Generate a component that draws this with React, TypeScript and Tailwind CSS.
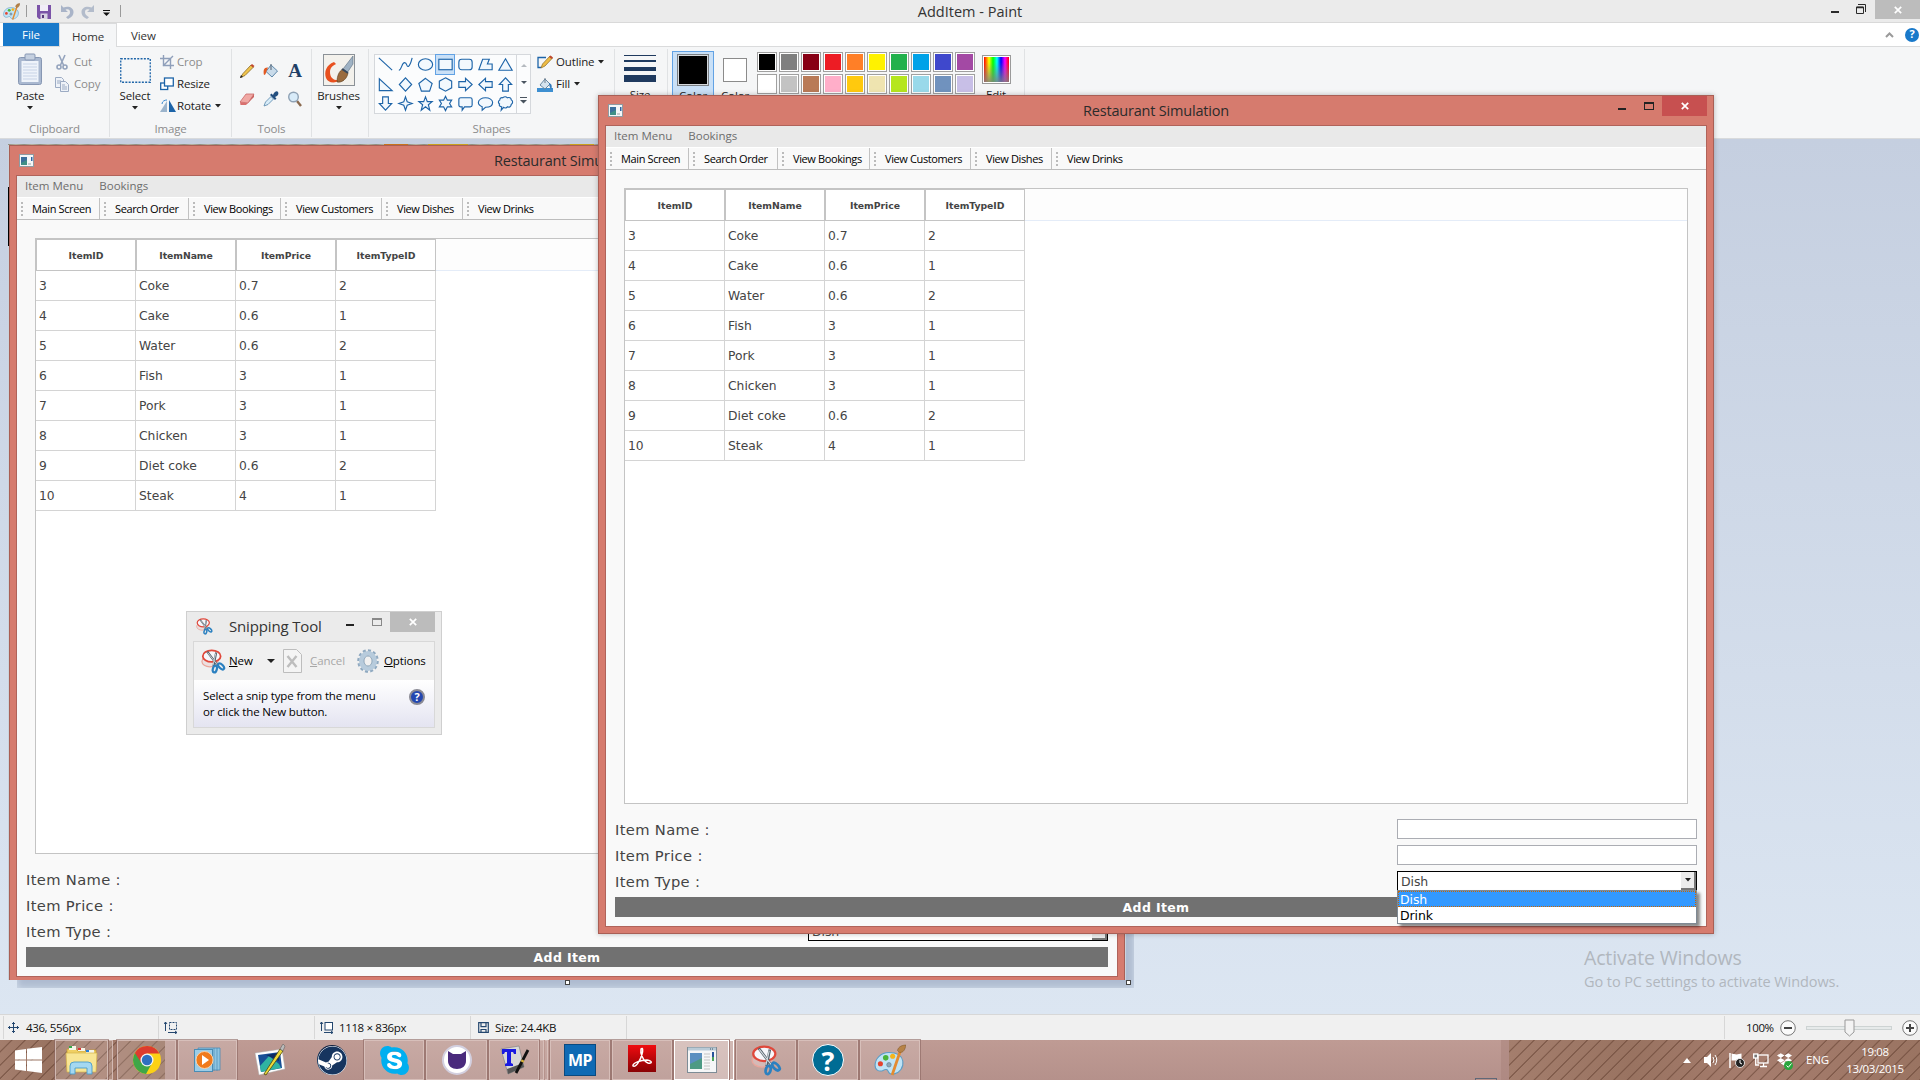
import React from "react";
import { FaSkype, FaSteam, FaDropbox } from "react-icons/fa";

const DownArrow = ({ className = "" }: { className?: string }) => (
  <svg className={"shrink-0 " + className} width="6" height="4" viewBox="0 0 6 4">
    <path d="M0 0h6L3 3.6z" fill="#222" />
  </svg>
);

const CloseX = ({ s = 8 }: { s?: number }) => (
  <svg width={s} height={s} viewBox="0 0 8 8">
    <path d="M.8.8l6.4 6.4M7.2.8L.8 7.2" stroke="#fff" strokeWidth="1.7" />
  </svg>
);

const PaletteIcon = ({ size, className = "" }: { size: number; className?: string }) => (
  <svg className={"shrink-0 " + className} width={size} height={size} viewBox="0 0 30 30">
    <path d="M14 8C6 8 1 14 1 20c0 5 4 6 7 5 2-1 4-2 5 0 1 2 2 4 6 3 5-1 9-6 8-12-1-5-6-8-13-8z" fill="#bfe3f5" stroke="#5d9cc4" />
    <circle cx="6" cy="18.500" r="2.400" fill="#e5432d" />
    <circle cx="11" cy="13" r="2.600" fill="#4bb43a" />
    <circle cx="17.500" cy="11.500" r="2.400" fill="#f5b51c" />
    <circle cx="14" cy="19.500" r="2.100" fill="#8fa6b5" stroke="#5d7c90" strokeWidth=".6" />
    <path d="M24.500 7L17 29" stroke="#e38b31" strokeWidth="2.600" />
    <path d="M22 6c1-4 5-5 8-5-1 4-2 7-6 7z" fill="#b78246" stroke="#7d5628" strokeWidth=".5" />
  </svg>
);

const SnipIcon = ({ size, className = "" }: { size: number; className?: string }) => (
  <svg className={"shrink-0 " + className} width={size} height={size} viewBox="0 0 28 28">
    <ellipse cx="10" cy="14" rx="9" ry="6" fill="#e8cfcf" fillOpacity=".5" stroke="#e9a69c" strokeWidth="1.300" />
    <ellipse cx="12" cy="8" rx="10" ry="6.500" fill="#f7f7fb" stroke="#e0483b" strokeWidth="2" />
    <path d="M7 3l12 16M17 4l-3 15" stroke="#55606a" strokeWidth="2.400" />
    <path d="M7.500 4l11 14M16.500 5l-3 13" stroke="#d6dde2" strokeWidth="1" />
    <ellipse cx="15.500" cy="22.500" rx="2.200" ry="3.800" transform="rotate(15 15.500 22.500)" fill="none" stroke="#2b80c0" strokeWidth="2.500" />
    <ellipse cx="22.500" cy="19.500" rx="2.200" ry="4.200" transform="rotate(-45 22.500 19.500)" fill="none" stroke="#2b80c0" strokeWidth="2.500" />
  </svg>
);

/* ---------- Paint ribbon ---------- */

const shapes: React.ReactNode[] = [
  <path d="M3 3l14 13" />,
  <path d="M3 16c3 0 3-8 6-8s2 5 4 4 3-5 4-9" fill="none" />,
  <ellipse cx="10" cy="10" rx="7.500" ry="6" />,
  <rect x="3" y="4.500" width="14" height="11" />,
  <rect x="3" y="4.500" width="14" height="11" rx="3" />,
  <path d="M3 15.500L7 4.500h7l-2 5h5v6z" />,
  <path d="M10 4l7 12H3z" />,
  <path d="M3.500 4v12.500H17z" />,
  <path d="M10 3l6.500 7L10 17l-6.500-7z" />,
  <path d="M10 3.500l7 5.500-2.700 8H5.700L3 9z" />,
  <path d="M10 3l6.500 3.500v7L10 17l-6.500-3.500v-7z" />,
  <path d="M3 7h7V3.500l7 6.500-7 6.500V13H3z" />,
  <path d="M17 7h-7V3.500L3 10l7 6.500V13h7z" />,
  <path d="M7 17v-7H3.500L10 3l6.500 7H13v7z" />,
  <path d="M7 3v7H3.500L10 17l6.500-7H13V3z" />,
  <path d="M10 3l1.800 5.200L17 10l-5.200 1.800L10 17l-1.800-5.200L3 10l5.200-1.800z" />,
  <path d="M10 3l1.900 5H17l-4 3.300L14.500 17 10 13.500 5.500 17 7 11.300 3 8h5.100z" />,
  <path d="M10 2.500l2 4h4.500L14.300 10l2.200 3.500H12l-2 4-2-4H3.500L5.700 10 3.500 6.500H8z" />,
  <path d="M5 4h10q2 0 2 2v5.500q0 2-2 2H9L6.500 17v-3.500H5q-2 0-2-2V6q0-2 2-2z" />,
  <path d="M10 4c4 0 7.500 2 7.500 5s-3 5-7.500 5L6.500 17v-3.600C4 12.500 2.500 11 2.500 9c0-3 3.500-5 7.500-5z" />,
  <path d="M7 4c2-1.500 4-1 5 0 2-.8 4 .2 4 2 2 1 2 4 0 5 0 2-2 3.400-4 2.500-1 1.500-3 1.500-4 .5L5.500 17l.5-3.400C4 13.500 3 12 3.700 10.500 2 9.500 2.300 7 4 6.300 4 4.500 5.500 3.500 7 4z" />,
];

const palette = [
  ["bg-black", "bg-[#7f7f7f]", "bg-[#880015]", "bg-[#ed1c24]", "bg-[#ff7f27]", "bg-[#fff200]", "bg-[#22b14c]", "bg-[#00a2e8]", "bg-[#3f48cc]", "bg-[#a349a4]"],
  ["bg-white", "bg-[#c3c3c3]", "bg-[#b97a57]", "bg-[#ffaec9]", "bg-[#ffc90e]", "bg-[#efe4b0]", "bg-[#b5e61d]", "bg-[#99d9ea]", "bg-[#7092be]", "bg-[#c8bfe7]"],
];

const Group = ({ w, label, children }: { w: string; label?: string; children: React.ReactNode }) => (
  <div className={"flex h-[88px] shrink-0 flex-col border-r border-[#e0e2e4] " + w}>
    <div className="flex h-[72px]">{children}</div>
    <div className="text-center leading-4 text-[#8c8c8c]">{label}</div>
  </div>
);

const PaintRibbon = () => (
  <div className="flex h-[92px] items-start border-b border-[#d8dadc] bg-[#f5f6f7] pt-[2px] text-[11.5px] tracking-[-0.15px] text-[#222]">
    <Group w="w-[110px]" label="Clipboard">
      <div className="ml-[9px] flex w-[42px] flex-col items-center pt-[4px]">
        <svg width="26" height="33" viewBox="0 0 26 33">
          <rect x="1.500" y="4.500" width="23" height="27" rx="2" fill="#a9b8d0" stroke="#8797b3" />
          <rect x="4.500" y="8" width="17" height="21" fill="#eef3fa" />
          <path d="M6 11h14M6 14h14M6 17h14M6 20h14M6 23h14M6 26h14" stroke="#c7d3e6" />
          <rect x="8" y="1" width="10" height="6" rx="1" fill="#c5d0e0" stroke="#8797b3" />
        </svg>
        <span className="mt-[2px] leading-4">Paste</span>
        <DownArrow className="mt-[2px]" />
      </div>
      <div className="ml-[3px] flex flex-col gap-[6px] pt-[5px] text-[#8c8c8c]">
        <div className="flex h-4 items-center gap-[4px]">
          <svg width="16" height="16" viewBox="0 0 16 16" fill="none" stroke="#94a3bd" strokeWidth="1.600">
            <path d="M5 1l4.500 10M11 1L6.500 11" /><circle cx="5" cy="13" r="2" /><circle cx="11" cy="13" r="2" />
          </svg>
          Cut
        </div>
        <div className="flex h-4 items-center gap-[4px]">
          <svg width="16" height="16" viewBox="0 0 16 16" fill="#eef2f8" stroke="#9cabc3">
            <path d="M1.500 1.500h6l2 2v8h-8zM3 5h4M3 7h4" /><path d="M6.500 5.500h5l3 3v7h-8zM8 9h3M8 11h5M8 13h5" />
          </svg>
          Copy
        </div>
      </div>
    </Group>
    <Group w="w-[122px]" label="Image">
      <div className="ml-[5px] flex w-[40px] flex-col items-center pt-[9px]">
        <svg width="31" height="25" viewBox="0 0 31 25"><rect x=".75" y=".75" width="29.500" height="23.500" fill="none" stroke="#1d64a8" strokeWidth="1.300" strokeDasharray="2 1.300" /></svg>
        <span className="mt-[5px] leading-4">Select</span>
        <DownArrow className="mt-[2px]" />
      </div>
      <div className="ml-[5px] flex flex-col gap-[6px] pt-[5px]">
        <div className="flex h-4 items-center gap-[3px] text-[#8c8c8c]">
          <svg width="14" height="14" viewBox="0 0 14 14" fill="none" stroke="#8f9fba" strokeWidth="1.400"><path d="M3.500 0v10.500H14M0 3.500h10.500V14M3 11l10-10" /></svg>
          Crop
        </div>
        <div className="flex h-4 items-center gap-[3px]">
          <svg width="14" height="14" viewBox="0 0 14 14" fill="#fff" stroke="#1d64a8" strokeWidth="1.300"><rect x=".7" y="6" width="7" height="6.500" /><rect x="4.500" y="1" width="8.800" height="8" /></svg>
          Resize
        </div>
        <div className="flex h-4 items-center gap-[3px]">
          <svg width="16" height="14" viewBox="0 0 16 14"><path d="M7 2v11H0z" fill="#9bb4cc" /><path d="M9 1v12h7z" fill="#1d64a8" /><path d="M2 5c0-3 3-4 5-4" stroke="#3a8ad0" fill="none" /></svg>
          <span className="-ml-[2px]">Rotate</span>
          <DownArrow className="ml-[1px]" />
        </div>
      </div>
    </Group>
    <Group w="w-[80px]" label="Tools">
      <div className="grid grid-cols-3 content-start gap-x-[8px] gap-y-[12px] pt-[14px] pl-[7px]">
        <svg width="16" height="16" viewBox="0 0 16 16"><path d="M1.500 14.500L4 10.500 12 2l2.500 2L6 12.500z" fill="#f0c44c" stroke="#8a6a25" strokeWidth=".8" /><path d="M11.500 2.500L13 1l2.500 2-1.500 1.500z" fill="#c0492f" /><path d="M1 15l1-3 2 2z" fill="#222" /></svg>
        <svg width="16" height="16" viewBox="0 0 16 16"><path d="M8 2l6.500 6L9 14 3 8.500z" fill="#c9dbea" stroke="#5e88aa" /><path d="M8 1v6" stroke="#6c7c8c" strokeWidth="1.300" /><path d="M5 4.500C1 4 0 7 1 12c2 0 2-3 3-5z" fill="#e35a22" /></svg>
        <span className="flex h-4 w-4 items-center justify-center font-['Liberation_Serif'] text-[19px] font-bold tracking-normal text-[#1f3f66]">A</span>
        <svg width="16" height="16" viewBox="0 0 16 16"><path d="M1 11l6-8h8l-6 9z" fill="#f0a8a4" stroke="#c96a6a" strokeWidth=".8" /><path d="M1 11l.5 3H7l2-2z" fill="#d9706f" /><path d="M9 12l6-9v3l-8 8z" fill="#c9625f" /></svg>
        <svg width="16" height="16" viewBox="0 0 16 16"><path d="M1 15l1.500-4L8 5.500 10.500 8 5 13.500z" fill="#d8ecf8" stroke="#5585aa" strokeWidth=".8" /><path d="M7 4l5 5 1.500-1.500L12 6c3-1 4-3 3-5s-4 0-5 3l-1.500-1.500z" fill="#234f7f" /></svg>
        <svg width="16" height="16" viewBox="0 0 16 16"><path d="M10 10l4 5" stroke="#8a6a4f" strokeWidth="2.400" /><circle cx="6.500" cy="6" r="4.800" fill="#d8ebf9" stroke="#8fa2b5" strokeWidth="1.400" /></svg>
      </div>
    </Group>
    <Group w="w-[57px]">
      <div className="flex w-[56px] flex-col items-center pt-[5px] pr-[3px]">
        <svg width="32" height="32" viewBox="0 0 32 32">
          <rect x=".5" y=".5" width="31" height="31" fill="#f3f1ec" stroke="#8b9197" />
          <path d="M11 8C3 11 1 18 3 24c2 5 9 6 14 2-6 1-10-2-10-8 0-5 4-7 6-8z" fill="#e8501f" />
          <path d="M20 15L30 2v8l-6 9z" fill="#9fb2c4" stroke="#5b6d80" strokeWidth=".6" />
          <path d="M14 28c0-6 2-11 6-13l5 4c-1 6-6 10-11 9z" fill="#9a6b3e" stroke="#5a3a1a" strokeWidth=".6" />
          <path d="M19 15l6 4" stroke="#39495c" strokeWidth="2" />
        </svg>
        <span className="mt-[2px] leading-4">Brushes</span>
        <DownArrow className="mt-[2px]" />
      </div>
    </Group>
    <Group w="w-[246px]" label="Shapes">
      <div className="mt-[5px] ml-[5px] flex h-[60px] w-[157px] border border-[#d5d8dc] bg-[#fbfcfd]">
        <div className="grid w-[142px] grid-cols-7 content-start border-r border-[#d5d8dc]">
          {shapes.map((s, i) => (
            <span key={i} className={i === 3 ? "-mt-px -mb-[0.5px] flex h-[21px] w-[20px] items-center justify-center border border-[#62a2e4] bg-[#c9e0f7]" : "flex h-[19.500px] w-[20px] items-center justify-center"}>
              <svg className="shrink-0" width="19" height="19" viewBox="0 0 20 20" fill="#f2f8fd" stroke="#1d64a8" strokeWidth="1.200">{s}</svg>
            </span>
          ))}
        </div>
        <div className="flex flex-1 flex-col items-center justify-between py-[9px]">
          <svg width="6" height="3" viewBox="0 0 6 3"><path d="M0 3h6L3 0z" fill="#b5bac0" /></svg>
          <svg width="6" height="3" viewBox="0 0 6 3"><path d="M0 0h6L3 3z" fill="#4a5560" /></svg>
          <svg width="7" height="7" viewBox="0 0 7 7"><path d="M0 .5h7" stroke="#4a5560" /><path d="M0 3h7L3.500 6.500z" fill="#4a5560" /></svg>
        </div>
      </div>
      <div className="ml-[6px] flex flex-col gap-[6px] pt-[5px]">
        <div className="flex h-4 items-center gap-[3px]">
          <svg width="16" height="14" viewBox="0 0 16 14"><path d="M9 2.500H1v10h3" stroke="#1d64a8" fill="none" strokeWidth="1.300" /><path d="M4 13l1.500-4L13 1l2.500 2L8 11z" fill="#eebc45" stroke="#8a6a25" strokeWidth=".7" /><path d="M12 2l1.500-1.500 2.500 2L14.500 4z" fill="#c0492f" /></svg>
          Outline
          <DownArrow className="ml-[1px]" />
        </div>
        <div className="flex h-4 items-center gap-[3px]">
          <svg width="16" height="15" viewBox="0 0 16 15"><rect y="11" width="16" height="4" fill="#3d8fd1" /><path d="M8 2l5 5-5 5-5-4z" fill="#d5e3ee" stroke="#5e7f9a" strokeWidth=".9" /><path d="M8 1v5" stroke="#6c7c8c" /><path d="M12 6c3 1 3 3 2.500 6-2-1-2-3-2.500-6z" fill="#2f77b8" /></svg>
          Fill
          <DownArrow className="ml-[1px]" />
        </div>
      </div>
    </Group>
    <Group w="w-[53px]">
      <div className="flex w-[50px] flex-col items-center pt-[5px]">
        <div className="mt-[1px] flex w-[32px] flex-col">
          <div className="h-[1px] bg-[#1f3a5f]" />
          <div className="mt-[4px] h-[2px] bg-[#1f3a5f]" />
          <div className="mt-[5px] h-[4px] bg-[#1f3a5f]" />
          <div className="mt-[4px] h-[7px] bg-[#1f3a5f]" />
        </div>
        <span className="mt-[5px] leading-4">Size</span>
      </div>
    </Group>
    <Group w="w-[357px]">
      <div className="mt-[2px] ml-[4px] flex h-[64px] w-[42px] flex-col items-center border border-[#62a2e4] bg-[#c9e0f7] pt-[2px]">
        <div className="h-[32px] w-[32px] border border-[#7b8085] bg-black outline-1 -outline-offset-2 outline-[#d4d8dc]" />
        <span className="mt-[2px] leading-4">Color</span>
      </div>
      <div className="ml-[3px] flex w-[36px] flex-col items-center pt-[9px]">
        <div className="h-[24px] w-[24px] border border-[#8b8b8b] bg-white" />
        <span className="mt-[6px] leading-4">Color</span>
      </div>
      <div className="mt-[3px] ml-[4px] flex flex-col gap-[2px]">
        {palette.map((row, r) => (
          <div key={r} className="flex gap-[2px]">
            {row.map((c) => (
              <div key={c} className="h-[20px] w-[20px] border border-[#a0a0a0] bg-white p-[1px]"><div className={"h-full w-full " + c} /></div>
            ))}
          </div>
        ))}
      </div>
      <div className="ml-[6px] flex w-[30px] flex-col items-center pt-[6px]">
        <div className="h-[29px] w-[29px] border border-[#9a9a9a] bg-white p-[1px]">
          <div className="h-full w-full bg-[linear-gradient(180deg,rgba(128,128,128,0)_20%,rgba(128,128,128,0.850)_100%),linear-gradient(90deg,#f00,#ff0_20%,#0f0_36%,#0ff_52%,#00f_68%,#f0f_84%,#f00)]" />
        </div>
        <span className="mt-[3px] leading-4">Edit</span>
      </div>
    </Group>
  </div>
);

const PaintHeader = () => (
  <>
    <div className="flex h-[23px] border-b border-[#d9d9d9] bg-[#ebebeb]">
      <div className="flex w-[200px] items-center pl-[3px]">
        <PaletteIcon size={17} />
        <div className="ml-[6px] h-[12px] w-px bg-[#9a9a9a]" />
        <svg className="mt-[2px] ml-[10px]" width="14" height="14" viewBox="0 0 14 14"><path d="M0 0h14v14H2l-2-2z" fill="#7b53a8" /><rect x="3" width="8" height="6" fill="#f1edf7" /><rect x="3.500" y="8.500" width="7" height="5.500" fill="#d8d2e2" /><rect x="5" y="10" width="2" height="3" fill="#54387a" /></svg>
        <svg className="mt-[1px] ml-[9px]" width="14" height="14" viewBox="0 0 14 14"><path d="M1 0v7h7L5.500 4.700c3-1 4.500 0 4.500 2.500 0 2-1.500 3.500-4 5L8 14c4-2 5.500-4 5.500-7 0-4.500-5-6.500-10-4.500z" fill="#a9b4c8" /></svg>
        <svg className="mt-[1px] ml-[7px] -scale-x-100" width="14" height="14" viewBox="0 0 14 14"><path d="M1 0v7h7L5.500 4.700c3-1 4.500 0 4.500 2.500 0 2-1.500 3.500-4 5L8 14c4-2 5.500-4 5.500-7 0-4.500-5-6.500-10-4.500z" fill="#b3bccb" /></svg>
        <svg className="mt-[4px] ml-[8px]" width="7" height="6" viewBox="0 0 7 6"><path d="M0 .5h7" stroke="#111" /><path d="M0 2.500h7L3.500 6z" fill="#111" /></svg>
        <div className="ml-[10px] h-[12px] w-px bg-[#9a9a9a]" />
      </div>
      <div className="flex-1 text-center text-[14.500px] leading-[23px] text-[#333]">AddItem - Paint</div>
      <div className="flex w-[180px] justify-end">
        <div className="mt-[11px] h-[2px] w-[8px] bg-[#2a2a2a]" />
        <svg className="mt-[4px] ml-[17px]" width="10" height="10" viewBox="0 0 10 10" fill="none" stroke="#2a2a2a"><path d="M2 .5h7.500V8" /><path d="M.5 3h7v6.500h-7z" /><path d="M.5 3.500h7" strokeWidth="1.500" /></svg>
        <div className="ml-[9px] flex h-[19px] w-[45px] items-center justify-center bg-[#bcbcbc]"><CloseX /></div>
      </div>
    </div>
    <div className="flex h-[24px] border-b border-[#dadbdc] bg-white pl-[3px] text-[11.500px] tracking-[-0.1px]">
      <div className="h-[23px] w-[56px] bg-[#1979ca] text-center leading-[24px] text-white">File</div>
      <div className="h-[24px] w-[58px] border-x border-t border-[#dadbdc] bg-[#f5f6f7] text-center leading-[25px] text-[#333]">Home</div>
      <div className="ml-[14px] leading-[26px] text-[#333]">View</div>
      <div className="ml-auto flex items-center gap-[11px]">
        <svg width="9" height="6" viewBox="0 0 9 6"><path d="M1 5l3.500-3.500L8 5" stroke="#9a9a9a" strokeWidth="2" fill="none" /></svg>
        <div className="mr-[1px] flex h-[14px] w-[14px] items-center justify-center rounded-full bg-[#1979ca] text-[11px] font-bold text-white">?</div>
      </div>
    </div>
    <PaintRibbon />
  </>
);

/* ---------- Restaurant application window ---------- */

const rows = [
  ["3", "Coke", "0.7", "2"],
  ["4", "Cake", "0.6", "1"],
  ["5", "Water", "0.6", "2"],
  ["6", "Fish", "3", "1"],
  ["7", "Pork", "3", "1"],
  ["8", "Chicken", "3", "1"],
  ["9", "Diet coke", "0.6", "2"],
  ["10", "Steak", "4", "1"],
];

const tools = [
  ["Main Screen", "w-[83px]"],
  ["Search Order", "w-[89px]"],
  ["View Bookings", "w-[92px]"],
  ["View Customers", "w-[101px]"],
  ["View Dishes", "w-[81px]"],
  ["View Drinks", "w-[90px]"],
];

const AppIcon = () => (
  <svg width="15" height="13" viewBox="0 0 15 13">
    <rect x=".5" y=".5" width="14" height="12" fill="#f4f7f8" stroke="#8e9ba3" />
    <rect x="2" y="3" width="6" height="8" fill="#3f8f86" />
    <path d="M2 3h6v3l-6 3z" fill="#3c6f9c" />
    <rect x="12" y="3" width="1.500" height="4" fill="#2f67a5" />
    <rect x="9" y="9" width="3" height="2" fill="#c8cdd0" />
  </svg>
);

const RestaurantWindow = ({ open = false }: { open?: boolean }) => (
  <div className="flex h-[839px] w-[1116px] flex-col border border-[#a95f55] bg-[#d67b6e] px-[6px] pb-[6px]">
    <div className="flex h-[29px] shrink-0">
      <div className="w-[135px] pt-[8px] pl-[3px]"><AppIcon /></div>
      <div className="flex-1 text-center text-[14.500px] leading-[29px] tracking-[-0.2px] text-[#2b2b2b]">Restaurant Simulation</div>
      <div className="flex w-[135px] justify-end">
        <div className="mt-[12px] h-[2px] w-[8px] bg-[#222]" />
        <div className="mt-[6px] ml-[18px] h-[8px] w-[10px] border border-t-2 border-[#222]" />
        <div className="ml-[8px] flex h-[20px] w-[45px] items-center justify-center bg-[#c75050]"><CloseX /></div>
      </div>
    </div>
    <div className="flex flex-1 flex-col border border-[#b0635a] bg-[#f9f9f9]">
      <div className="flex h-[21px] gap-[16px] bg-[#e9e9e9] pl-[8px] text-[11.500px] leading-[20px] text-[#6d6d6d]">
        <span>Item Menu</span>
        <span>Bookings</span>
      </div>
      <div className="flex h-[23px] border-y border-t-white border-b-[#bdbdbd] text-[11px] tracking-[-0.38px] text-black">
        {tools.map(([t, w], i) => (
          <div key={t} className={"flex items-center pl-[4px] " + w + (i < 5 ? " border-r border-[#c2c2c2]" : "")}>
            <div className="h-[14px] w-[2px] bg-[repeating-linear-gradient(180deg,#bbb_0px,#bbb_2px,transparent_2px,transparent_4px)]" />
            <span className="ml-[9px] leading-5 whitespace-nowrap">{t}</span>
          </div>
        ))}
      </div>
      <div className="mx-[18px] mt-[18px] h-[616px] border border-[#c4c4c4] bg-white font-['DejaVu_Sans'] text-[#444]">
        <div className="flex h-[32px] border-b border-[#e4ecf8] bg-[#fdfdfd] text-[9.300px] font-bold tracking-[-0.05px]">
          {["ItemID", "ItemName", "ItemPrice", "ItemTypeID"].map((h) => (
            <div key={h} className="h-[32px] w-[100px] border border-[#c4c4c4] bg-white text-center leading-[32px]">{h}</div>
          ))}
        </div>
        {rows.map((r) => (
          <div key={r[0]} className="flex h-[30px] text-[12.300px] leading-[31px]">
            {r.map((c, i) => (
              <div key={i} className="w-[100px] border-r border-b border-[#d4d4d4] pl-[3px]">{c}</div>
            ))}
          </div>
        ))}
      </div>
      <div className="mx-[9px] mt-[15px] flex flex-col gap-[6px] font-['DejaVu_Sans'] text-[14.700px] leading-[22px] tracking-[0.35px] text-[#444]">
        <div className="flex h-[20px] justify-between">
          <span>Item Name :</span>
          <div className="w-[300px] border border-[#abadb3] bg-white" />
        </div>
        <div className="flex h-[20px] justify-between">
          <span>Item Price :</span>
          <div className="w-[300px] border border-[#abadb3] bg-white" />
        </div>
        <div className="flex h-[20px] justify-between">
          <span>Item Type :</span>
          <div className="relative flex w-[300px] justify-between border border-black bg-white pl-[3px] text-[12.500px] leading-[19px] tracking-[-0.1px]">
            Dish
            <div className="flex h-[18px] w-[15px] items-center justify-center border-r-2 border-b-2 border-[#777] bg-[#ececec]">
              <DownArrow />
            </div>
            {open && (
              <div className="absolute top-[18px] -left-px z-20 h-[34px] w-[300px] border border-[#7f8a95] bg-white leading-[17px] text-black shadow-[3px_3px_3px_rgba(0,0,0,0.450)]">
                <div className="h-[16px] border border-dotted border-[#cc6600] bg-[#3399ff] pl-[1px] leading-[15px] text-white">Dish</div>
                <div className="pl-[2px]">Drink</div>
              </div>
            )}
          </div>
        </div>
        <div className="h-[20px] bg-[#717171] text-center text-[12.500px] leading-[21px] font-bold text-white">Add Item</div>
      </div>
    </div>
  </div>
);

/* ---------- Snipping tool ---------- */

const SnippingTool = () => (
  <div className="flex h-[124px] w-[256px] flex-col border border-[#cfcfcf] bg-[#ebebeb] px-[6px] pb-[6px]">
    <div className="flex h-[29px]">
      <SnipIcon size={17} className="mt-[6px] ml-[3px]" />
      <span className="mt-[3px] ml-[16px] text-[15px] leading-[22px] tracking-[-0.15px] text-[#333]">Snipping Tool</span>
      <div className="ml-auto flex">
        <div className="mt-[12px] h-[2px] w-[8px] bg-[#222]" />
        <div className="mt-[6px] ml-[18px] h-[8px] w-[10px] border border-t-2 border-[#888]" />
        <div className="ml-[8px] flex h-[20px] w-[45px] items-center justify-center bg-[#bcbcbc]"><CloseX /></div>
      </div>
    </div>
    <div className="flex flex-1 flex-col border border-[#d8d8d8]">
      <div className="flex h-[38px] items-center bg-[#f0f0f0] pl-[7px] text-[11.500px] tracking-[-0.1px] text-black">
        <SnipIcon size={25} />
        <span className="ml-[3px] w-[38px]"><u>N</u>ew</span>
        <svg width="8" height="4" viewBox="0 0 8 4"><path d="M0 0h8L4 4z" fill="#222" /></svg>
        <svg className="ml-[8px]" width="19" height="24" viewBox="0 0 19 24"><path d="M.5.500h13l5 5v18H.5z" fill="#f4f4f4" stroke="#bdbdbd" /><path d="M4.500 7l9 11M13.500 7l-9 11" stroke="#bdbdbd" strokeWidth="2.400" /></svg>
        <span className="ml-[8px] text-[#a8a8a8]"><u>C</u>ancel</span>
        <svg className="ml-[12px]" width="22" height="24" viewBox="0 0 22 24">
          <ellipse cx="11" cy="12" rx="9.500" ry="10.500" fill="none" stroke="#8fa9c0" strokeWidth="2.500" strokeDasharray="3 2.200" />
          <ellipse cx="11" cy="12" rx="6.500" ry="7.500" fill="none" stroke="#b7cbdc" strokeWidth="5" />
          <ellipse cx="11" cy="12" rx="4" ry="5" fill="#f0f0f0" stroke="#7f99b0" strokeWidth=".8" />
        </svg>
        <span className="ml-[5px]"><u>O</u>ptions</span>
      </div>
      <div className="flex flex-1 justify-between bg-linear-to-b from-white to-[#e4e4f1] pt-[8px] pr-[9px] pl-[9px] text-[11.500px] leading-[16px] tracking-[-0.13px] text-black">
        <div className="whitespace-nowrap">Select a snip type from the menu<br />or click the New button.</div>
        <div className="mt-px flex h-[16px] w-[16px] items-center justify-center rounded-full border-2 border-[#8a8a94] bg-[#2347b0] text-[11px] font-bold text-white">?</div>
      </div>
    </div>
  </div>
);

/* ---------- Status bar and taskbar ---------- */

const StatusBar = () => (
  <div className="flex h-[26px] border-t border-[#d7d7d7] bg-[#f0f0f0] py-[1px] pl-[3px] text-[11.500px] leading-[24px] tracking-[-0.38px] text-[#111]">
    <div className="flex w-[156px] items-center border-x border-[#d7d7d7] pl-[4px]">
      <svg width="11" height="11" viewBox="0 0 11 11" stroke="#24476f" fill="none"><path d="M5.500 0v11M0 5.500h11M4 2l1.500-1.500L7 2M4 9l1.500 1.500L7 9M2 4L.5 5.500 2 7M9 4l1.500 1.500L9 7" /></svg>
      <span className="ml-[7px]">436, 556px</span>
    </div>
    <div className="flex w-[156px] items-center border-r border-[#d7d7d7] pl-[5px]">
      <svg width="14" height="13" viewBox="0 0 14 13" stroke="#24476f" fill="none"><path d="M1.500 1v9M0 3l1.500-2L3 3M4 11.500h9M11 10l2 1.500-2 1.500" /><rect x="5.500" y="1.500" width="7" height="7" strokeDasharray="2 1" /></svg>
    </div>
    <div className="flex w-[156px] items-center border-r border-[#d7d7d7] pl-[5px]">
      <svg width="14" height="13" viewBox="0 0 14 13" stroke="#24476f" fill="none"><path d="M1.500 1v9M0 3l1.500-2L3 3M4 11.500h9M11 10l2 1.500-2 1.500" /><rect x="5" y="1.500" width="7.500" height="7.500" fill="#fff" /></svg>
      <span className="ml-[5px]">1118 × 836px</span>
    </div>
    <div className="flex w-[156px] items-center border-r border-[#d7d7d7] pl-[7px]">
      <svg width="11" height="11" viewBox="0 0 11 11" stroke="#24476f" fill="none"><path d="M.7.7h9.600v9.600H.7zM3 .7v4h5v-4M3 10.300V7.500h5v2.800" strokeWidth="1.200" /></svg>
      <span className="ml-[6px] tracking-[-0.25px]">Size: 24.4KB</span>
    </div>
    <div className="ml-auto flex w-[196px] items-center border-l border-[#d7d7d7] pl-[21px]">
      <span className="w-[28px]">100%</span>
      <svg className="ml-[6px]" width="16" height="16" viewBox="0 0 16 16"><circle cx="8" cy="8" r="7.300" fill="#fafafa" stroke="#777" /><path d="M4 8h8" stroke="#444" strokeWidth="2" /></svg>
      <svg className="ml-[10px]" width="86" height="18" viewBox="0 0 86 18"><rect x=".5" y="7.500" width="85" height="3" fill="#e6eaea" stroke="#cdd3d3" /><path d="M39 1h9v12l-4.500 4-4.500-4z" fill="#f3f3f3" stroke="#999" /></svg>
      <svg className="ml-[10px]" width="16" height="16" viewBox="0 0 16 16"><circle cx="8" cy="8" r="7.300" fill="#fafafa" stroke="#777" /><path d="M4 8h8M8 4v8" stroke="#444" strokeWidth="2" /></svg>
    </div>
  </div>
);

const WOOD = "bg-[repeating-linear-gradient(135deg,transparent_0px,transparent_7.5px,rgba(95,60,45,0.5)_8.2px,rgba(95,60,45,0.5)_8.8px,transparent_9.4px),linear-gradient(90deg,#a47e6d,#997361_30%,#a67d6e_60%,#9a7462)]";

const TaskButton = ({ w, children, kind = "button", stack = 0 }: { w: string; children: React.ReactNode; kind?: "button" | "plain" | "active"; stack?: number }) => (
  <div className={"flex h-[40px] shrink-0 " + w}>
    <div className={
      "flex flex-1 items-center justify-center " +
      (kind === "plain" ? "" : kind === "active" ? "border border-white bg-white/40 outline-1 outline-[#8a6660]/60" : "border border-[#dbc4bf]/80 bg-white/15 outline-1 outline-[#8a6660]/60")
    }>{children}</div>
    {stack > 0 && <div className={"ml-[1px] w-[4px] border border-l-0 " + (kind === "active" ? "border-white bg-white/30" : "border-[#dbc4bf]/80 bg-white/15")} />}
    {stack > 1 && <div className="ml-[1px] w-[3px] border border-l-0 border-[#dbc4bf]/80 bg-white/15" />}
  </div>
);

const Taskbar = () => (
  <div className="flex h-[40px] bg-linear-to-b from-[#bf9b94] to-[#b5918b] text-white">
    <div className="flex flex-1">
      <div className={"flex w-[165px] " + WOOD}>
        <div className="flex w-[55px] items-center pl-[15px]">
          <svg width="27" height="26" viewBox="0 0 27 26" fill="#fff"><path d="M0 3.500l11-1.600v10.600H0zM12 1.700L27 0v12.500H12zM0 13.500h11v10.600L0 22.500zM12 13.500h15V26l-15-1.900z" /></svg>
        </div>
        <TaskButton w="w-[58px]" stack={1}>
          <svg width="33" height="30" viewBox="0 0 33 30">
            <path d="M2 4h9l2 2h10l2-1h6v20H2z" fill="#f0cf62" stroke="#c29a35" strokeWidth=".8" />
            <rect x="4" y="1" width="7" height="4" fill="#f5f5e8" /><rect x="4" y="1" width="3" height="2" fill="#36a84a" />
            <rect x="13" y="3" width="7" height="3" fill="#f5f5e8" /><rect x="13" y="3" width="3" height="2" fill="#d33" />
            <rect x="21" y="5" width="8" height="3" fill="#f5f5e8" /><rect x="21" y="5" width="3" height="2" fill="#2a7fd4" />
            <path d="M1 8h31l-1 19H2z" fill="#f8e594" stroke="#d4b24c" strokeWidth=".7" />
            <path d="M5 29V21q0-4 4-4h14q4 0 4 4v8h-5v-6H10v6z" fill="#a4d8f2" stroke="#4a9cc9" strokeWidth=".9" />
          </svg>
        </TaskButton>
      </div>
      <div className="-ml-[48px] flex gap-[2px]">
        <TaskButton w="w-[59px]">
          <svg width="28" height="28" viewBox="0 0 28 28">
            <circle cx="14" cy="14" r="14" fill="#fcd116" />
            <path d="M14 14L1.900 7A14 14 0 0 0 13 28l6-11z" fill="#3fa648" />
            <path d="M14 7.500h12.400A14 14 0 0 0 1.900 7l6.500 10z" fill="#dd3b2e" />
            <circle cx="14" cy="14" r="6.500" fill="#f4f4f4" /><circle cx="14" cy="14" r="5.200" fill="#2f6fc0" />
          </svg>
        </TaskButton>
        <TaskButton w="w-[59px]">
          <svg width="28" height="26" viewBox="0 0 28 26">
            <path d="M4 1h22v22H8z" fill="#8fc5e2" stroke="#4a8cb5" strokeWidth=".8" /><path d="M23 1v23M20 1v23" stroke="#4a8cb5" strokeWidth=".7" />
            <rect x=".5" y="2.500" width="18" height="22" fill="#9bcde8" stroke="#4a8cb5" />
            <circle cx="10.500" cy="13" r="8.500" fill="#f07a1c" stroke="#f9d1a8" /><path d="M8 8l7 5-7 5z" fill="#fff" />
          </svg>
        </TaskButton>
        <TaskButton w="w-[61px]" kind="plain">
          <svg width="32" height="32" viewBox="0 0 32 32">
            <path d="M1 9l27-4 3 20-26 6z" fill="#fff" stroke="#aaa" strokeWidth=".5" /><path d="M4 11l22-3 2 16-21 4z" fill="#174f96" />
            <path d="M6 22l9-10 10 8 2 4-20 4z" fill="#2fb3a2" /><path d="M12 11l12-2 1 8z" fill="#0b2b63" />
            <path d="M10 30L26 5l3 2-17 24z" fill="#ecd93a" stroke="#4a4410" strokeWidth=".8" /><path d="M26 5l3-5 2 2-2 5z" fill="#bbb" stroke="#555" strokeWidth=".5" />
          </svg>
        </TaskButton>
        <TaskButton w="w-[60px]" kind="plain">
          <div className="flex h-[30px] w-[30px] items-center justify-center rounded-full bg-linear-to-b from-[#10203f] to-[#1b5a88]"><FaSteam size={29} color="#16355f" className="rounded-full bg-white" /></div>
        </TaskButton>
        <TaskButton w="w-[60px]"><div className="relative flex items-center justify-center"><div className="absolute h-[17px] w-[16px] bg-white" /><FaSkype size={33} color="#00aff0" className="relative" /></div></TaskButton>
        <TaskButton w="w-[61px]">
          <div className="flex h-[30px] w-[30px] items-center justify-center rounded-full border-2 border-[#d3d0e0] bg-white">
            <svg width="20" height="18" viewBox="0 0 20 18"><path d="M1 0l5 3h8l5-3v10c0 5-4 8-9 8s-9-3-9-8z" fill="#4a2a7c" /></svg>
          </div>
        </TaskButton>
        <TaskButton w="w-[59px]" stack={2}>
          <svg width="32" height="30" viewBox="0 0 32 30">
            <path d="M3 4l18-3 5 21-16 7z" fill="#d8d8d8" stroke="#777" strokeWidth=".6" /><path d="M10 29l16-7-1-4-16 6z" fill="#555" />
            <path d="M4 4h14v5h-2l-1-2h-2v11l2 1v2H7v-2l2-1V7H7L6 9H4z" fill="#1a1ae0" />
            <path d="M30 5L18 28" stroke="#111" strokeWidth="2.800" /><path d="M24 17l1-2" stroke="#d9b33a" strokeWidth="3" />
          </svg>
        </TaskButton>
        <TaskButton w="w-[60px]">
          <div className="flex h-[32px] w-[32px] items-center justify-center border border-[#0a4a80] bg-[#0f6ab4] font-['Noto_Sans'] text-[16px] font-bold tracking-[-0.5px]">MP</div>
        </TaskButton>
        <TaskButton w="w-[60px]">
          <div className="mb-[4px] flex h-[27px] w-[28px] items-center justify-center bg-linear-to-b from-[#f00c10] to-[#8a0204]">
            <svg width="22" height="22" viewBox="0 0 22 22" fill="none" stroke="#fff" strokeWidth="1.500"><path d="M2 19c-1-3 8-6 14-6 6 1 5 4 1 3C12 14 9 6 10 2c2-2 2 2 1 5C10 12 5 21 2 19z" /></svg>
          </div>
        </TaskButton>
        <TaskButton w="w-[60px]" kind="active" stack={1}>
          <svg width="30" height="26" viewBox="0 0 30 26">
            <rect x=".5" y=".5" width="29" height="25" fill="#f5f6f7" stroke="#7d8c96" /><path d="M1 2h28" stroke="#b9cad6" strokeWidth="3" />
            <path d="M23 2h4" stroke="#3a5566" strokeDasharray="1 1" />
            <rect x="3" y="6" width="12" height="16" fill="#4d9a84" /><path d="M3 6h12v5L3 17z" fill="#5b8fc0" />
            <path d="M17 7h6M17 10h6M17 13h6M17 16h6M17 19h6M17 22h6" stroke="#c3c3c3" /><rect x="25" y="5" width="2" height="5" fill="#27549b" /><rect x="25" y="10" width="2" height="4" fill="#4aa35c" />
          </svg>
        </TaskButton>
        <TaskButton w="w-[60px]"><SnipIcon size={31} /></TaskButton>
        <TaskButton w="w-[60px]">
          <div className="flex h-[32px] w-[32px] items-center justify-center rounded-full border-[1.500px] border-white bg-[#006c94] text-[27px] leading-none font-bold">?</div>
        </TaskButton>
        <TaskButton w="w-[60px]"><PaletteIcon size={32} /></TaskButton>
      </div>
      <div className="mt-[38px] ml-auto h-[2px] w-[22px] border border-b-0 border-[#5f6878]" />
      <div className="ml-[4px] w-[8px] bg-[#a8827a]/50" />
    </div>
    <div className={"flex w-[411px] items-center " + WOOD}>
      <svg className="ml-[174px] shrink-0" width="8" height="5" viewBox="0 0 8 5"><path d="M0 5h8L4 0z" fill="#fff" /></svg>
      <svg className="ml-[13px] shrink-0" width="15" height="16" viewBox="0 0 15 16"><path d="M0 5h3l4-4v14l-4-4H0z" fill="#fff" /><path d="M9 5q2 3 0 6M11 3q3.500 5 0 10" stroke="#fff" fill="none" /></svg>
      <svg className="ml-[10px] shrink-0" width="16" height="16" viewBox="0 0 16 16"><path d="M1 1v15" stroke="#fff" strokeWidth="1.500" /><path d="M2.500 1.500l5 1 5-1v7h-10z" fill="#fff" /><circle cx="11" cy="11" r="4.500" fill="#222" stroke="#fff" strokeWidth=".8" /><path d="M11 8v3l2 1" stroke="#fff" fill="none" /></svg>
      <svg className="ml-[8px] shrink-0" width="16" height="15" viewBox="0 0 16 15" fill="none" stroke="#fff" strokeWidth="1.300"><rect x="5" y="2" width="10" height="8" /><path d="M7 13.500h7M10.500 10v3" /><rect x=".7" y="1" width="4" height="4" fill="#777" /><path d="M2.700 5v7H6" /></svg>
      <div className="relative ml-[8px] h-[16px] w-[16px] shrink-0"><FaDropbox size={15} /><div className="absolute right-0 -bottom-[2px] flex h-[9px] w-[9px] items-center justify-center rounded-full bg-[#2aa53c]"><svg width="6" height="5" viewBox="0 0 6 5"><path d="M.5 2.500L2.300 4.300 5.500.5" stroke="#fff" fill="none" /></svg></div></div>
      <span className="ml-[13px] w-[24px] text-[11.500px] tracking-[-0.1px]">ENG</span>
      <div className="ml-[15px] flex w-[60px] flex-col items-center text-[11.500px] leading-[17px] tracking-[-0.35px]"><span>19:08</span><span>13/03/2015</span></div>
    </div>
  </div>
);

export default function App() {
  return (
    <div className="relative flex h-[1080px] w-[1920px] flex-col overflow-hidden font-['Open_Sans','Noto_Sans',sans-serif]">
      <PaintHeader />
      <div className="relative flex-1 bg-linear-to-b from-[#c5cfe0] to-[#dce6f2]">
        <div className="absolute top-[14px] left-[17px] h-[835px] w-[1117px] bg-[#aebbd0] shadow-[inset_0_0_7px_#d3deeb]" />
        <div className="absolute top-[5px] left-[8px] h-[836px] w-[1118px] overflow-hidden bg-[#cbd3dc]">
          <div className="absolute top-0 left-0 h-px w-full bg-[repeating-linear-gradient(90deg,#8f8f80_0px,#b5b2a0_8px,#8f8f80_16px)]" />
          <div className="absolute top-0 left-[376px] h-px w-[24px] bg-[#c8731c]" />
          <div className="absolute top-0 left-[420px] h-px w-[40px] bg-[#c9a01e]" />
          <div className="absolute top-0 left-[562px] h-px w-[24px] bg-[#c9a01e]" />
          <div className="absolute top-[43px] left-0 h-[59px] w-px bg-black" />
          <div className="absolute top-px left-px"><RestaurantWindow /></div>
        </div>
        <div className="absolute top-[841px] left-[565px] h-[5px] w-[5px] border border-[#444] bg-white" />
        <div className="absolute top-[841px] left-[1126px] h-[5px] w-[5px] border border-[#444] bg-white" />
        <div className="absolute top-[805px] left-[1584px] text-[#b1b7be]">
          <div className="text-[19.500px] leading-[28px] tracking-[-0.15px] whitespace-nowrap">Activate Windows</div>
          <div className="text-[14.500px] leading-[20px] tracking-[-0.08px] whitespace-nowrap">Go to PC settings to activate Windows.</div>
        </div>
      </div>
      <StatusBar />
      <Taskbar />
      <div className="absolute top-[611px] left-[186px]"><SnippingTool /></div>
      <div className="absolute top-[95px] left-[598px] z-20 shadow-[0_0_5px_rgba(60,60,60,0.350)]"><RestaurantWindow open /></div>
    </div>
  );
}
